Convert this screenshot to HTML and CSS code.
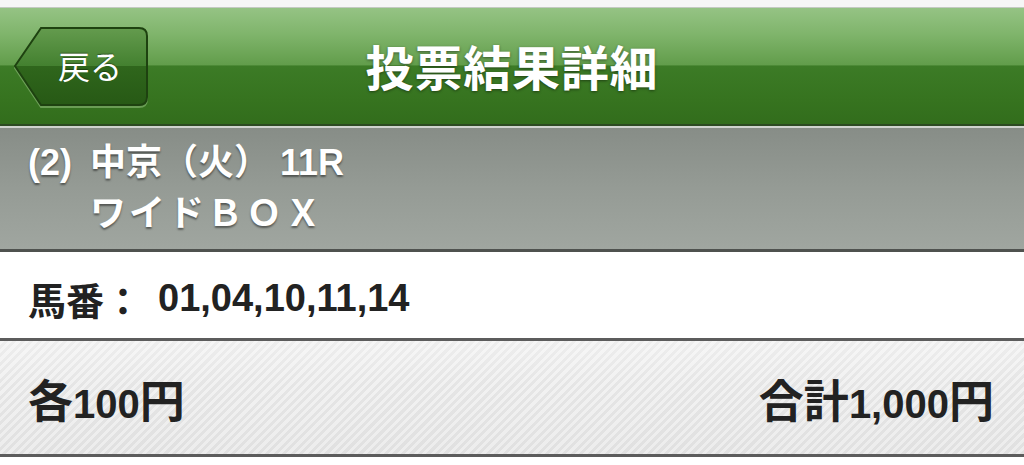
FILE: index.html
```html
<!DOCTYPE html>
<html lang="ja">
<head>
<meta charset="utf-8">
<title>投票結果詳細</title>
<link rel="stylesheet" href="styles.css">
</head>
<body>
<div class="topstrip"></div>
<header class="navbar">
  <a class="back" href="#">
    <svg class="back-shape" width="136" height="84" viewBox="0 0 136 84">
      <defs>
        <linearGradient id="bg" x1="0" y1="0" x2="0" y2="1">
          <stop offset="0" stop-color="#649b4e"/>
          <stop offset="0.5" stop-color="#43802f"/>
          <stop offset="0.5" stop-color="#2f661c"/>
          <stop offset="1" stop-color="#275915"/>
        </linearGradient>
      </defs>
      <path d="M2 43 L28 5 H126 Q134 5 134 13 V74 Q134 82 126 82 H28 Z" fill="none" stroke="rgba(170,210,150,0.45)" stroke-width="2"/>
      <path d="M2 41 L28 3 H126 Q134 3 134 11 V72 Q134 80 126 80 H28 Z" fill="url(#bg)" stroke="#1e4210" stroke-width="2"/>
    </svg>
    <span class="back-label">戻る</span>
  </a>
  <h1 class="title">投票結果詳細</h1>
  <div class="spacer"></div>
</header>
<section class="race">
  <div class="race-no">(2)</div>
  <div class="race-lines">
    <div class="race-line">中京（火） 11R</div>
    <div class="race-line race-type">ワイドＢＯＸ</div>
  </div>
</section>
<section class="numbers">
  <span class="numbers-label">馬番：</span><span class="numbers-value">01,04,10,11,14</span>
</section>
<section class="amount">
  <span class="amount-each"><span class="kanji">各</span>100<span class="kanji">円</span></span>
  <span class="amount-total"><span class="kanji">合計</span>1,000<span class="kanji">円</span></span>
</section>
</body>
</html>
```

FILE: styles.css
```css
html, body {
  margin: 0;
  padding: 0;
  background: #ffffff;
}
body {
  font-family: "Liberation Sans", "Noto Sans CJK JP", sans-serif;
  width: 1024px;
  overflow: hidden;
}
.topstrip {
  height: 7px;
  background: #f6f6f6;
  border-bottom: 1px solid #c4cac2;
}
.navbar {
  height: 118px;
  display: grid;
  grid-template-columns: 1fr auto 1fr;
  align-items: center;
  padding: 0 13px;
  box-sizing: border-box;
  background: linear-gradient(to bottom, #95c384 0%, #80b56c 22%, #629d4b 49%, #3c7b26 50%, #36731f 80%, #326d1c 100%);
  border-bottom: 2px solid #2c4a22;
}
.back {
  position: relative;
  width: 136px;
  height: 84px;
  display: flex;
  align-items: center;
  justify-content: center;
  text-decoration: none;
  justify-self: start;
  margin-top: 2px;
}
.back-shape {
  position: absolute;
  left: 0;
  top: 0;
}
.back-label {
  position: relative;
  color: #ffffff;
  font-family: "Noto Sans CJK JP", sans-serif;
  font-weight: 400;
  font-size: 32px;
  padding-left: 18px;
  padding-bottom: 4px;
  text-shadow: 0 -1px 1px rgba(0, 0, 0, 0.35);
}
.title {
  margin: 0;
  color: #ffffff;
  font-family: "Noto Sans CJK JP", sans-serif;
  font-weight: 700;
  font-size: 48px;
  letter-spacing: 0.8px;
  text-shadow: 0 1px 3px rgba(0, 0, 0, 0.45);
  line-height: 1;
  padding-bottom: 2px;
}
.race {
  height: 126px;
  box-sizing: border-box;
  border-top: 2px solid #cfd4ce;
  border-bottom: 3px solid #4f524f;
  background: linear-gradient(to bottom, #878d87 0%, #959b95 50%, #a0a6a0 100%);
  display: flex;
  gap: 18px;
  padding: 9px 0 0 28px;
  color: #ffffff;
  font-weight: 700;
  font-size: 36px;
  line-height: 51px;
  text-shadow: 0 2px 2px rgba(0, 0, 0, 0.45);
}
.race-line {
  white-space: nowrap;
}
.race-type {
  letter-spacing: 3px;
}
.numbers {
  height: 89px;
  box-sizing: border-box;
  border-bottom: 3px solid #5c5c5c;
  display: flex;
  align-items: center;
  padding: 6px 0 0 28px;
  color: #222222;
  font-weight: 700;
  font-size: 38px;
}
.numbers-value {
  margin-left: 16px;
}
.amount {
  height: 116px;
  box-sizing: border-box;
  border-bottom: 3px solid #5c5c5c;
  display: flex;
  align-items: center;
  justify-content: space-between;
  padding: 2px 30px 0 28px;
  color: #222222;
  font-weight: 700;
  font-size: 40px;
  background:
    linear-gradient(to bottom, rgba(255, 255, 255, 0.35), rgba(255, 255, 255, 0) 40%, rgba(0, 0, 0, 0.02)),
    repeating-linear-gradient(135deg, #f1f1f1 0 3px, #e5e5e5 3px 6px);
}
.kanji {
  font-size: 45px;
}
```
